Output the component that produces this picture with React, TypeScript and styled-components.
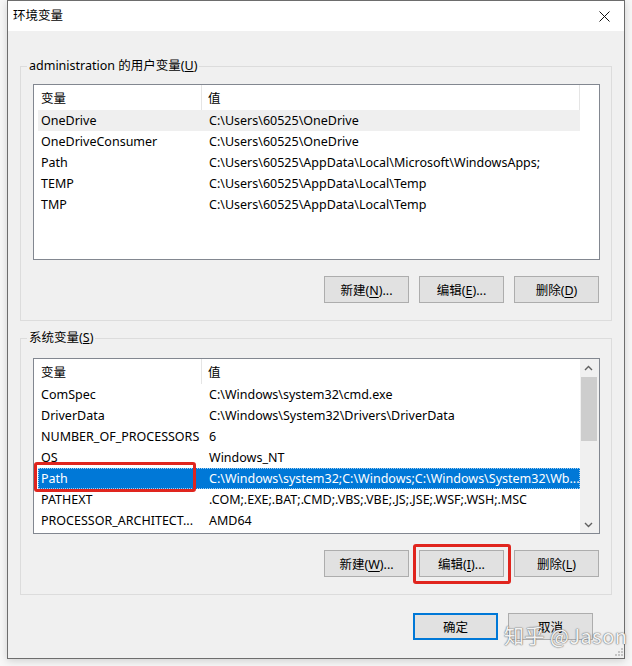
import React from "react";
import styled, { createGlobalStyle, css } from "styled-components";

const FONT = `"Noto Sans", "Noto Sans CJK SC", sans-serif`;

const GlobalStyle = createGlobalStyle`
  html, body { margin: 0; padding: 0; }
  body { background: #f7f7f7; font-family: ${FONT}; }
`;

const Page = styled.div`
  position: relative;
  width: 632px;
  height: 666px;
  box-sizing: border-box;
  padding: 0 7px 7px 7px;
  background: #f7f7f7;
`;

const Window = styled.div`
  height: 100%;
  box-sizing: border-box;
  border: 1px solid #6d6d6d;
  background: #f0f0f0;
  display: flex;
  flex-direction: column;
  box-shadow: 0 2px 8px rgba(0, 0, 0, 0.16);
  font-family: ${FONT};
  font-size: 12.5px;
  color: #000;
`;

const TitleBar = styled.div`
  height: 30px;
  flex: none;
  background: #fff;
  display: flex;
  align-items: center;
  justify-content: space-between;
  padding: 0 14px 0 5px;
`;

const Title = styled.div`
  line-height: 18px;
`;

const Body = styled.div`
  flex: 1;
  display: flex;
  flex-direction: column;
  padding: 26px 12px 0;
`;

const Group = styled.fieldset<{ $mt?: number }>`
  margin: ${(p) => p.$mt ?? 0}px 0 0;
  padding: 0 11px 17px 12px;
  border: 1px solid #dcdcdc;
  min-width: 0;
`;

const GroupLabel = styled.legend`
  margin-left: -6px;
  padding: 0 2px;
  line-height: 18px;
`;

const ListBox = styled.div<{ $mt: number }>`
  position: relative;
  margin-top: ${(p) => p.$mt}px;
  height: 176px;
  box-sizing: border-box;
  border: 1px solid #828790;
  background: #fff;
  display: flex;
  overflow: visible;
`;

const ListMain = styled.div`
  flex: 1;
  min-width: 0;
  overflow: hidden;
`;

const Header = styled.div<{ $cols: string }>`
  display: grid;
  grid-template-columns: ${(p) => p.$cols};
  height: 25px;
`;

const HeaderCell = styled.div<{ $pl: number; $sep?: boolean }>`
  padding-left: ${(p) => p.$pl}px;
  display: flex;
  align-items: center;
  ${(p) =>
    p.$sep &&
    css`
      border-right: 1px solid #e5e5e5;
    `}
`;

const Row = styled.div<{ $state?: "hover" | "selected" }>`
  margin-left: 4px;
  width: 542px;
  height: 21px;
  display: grid;
  grid-template-columns: 164px 1fr;
  align-items: center;
  white-space: nowrap;
  ${(p) =>
    p.$state === "hover" &&
    css`
      background: #efefef;
    `}
  ${(p) =>
    p.$state === "selected" &&
    css`
      background: #0078d7;
      color: #fff;
      outline: 1px dotted #9fd0f5;
      outline-offset: -1px;
    `}
`;

const NameCell = styled.div`
  padding-left: 3px;
  overflow: hidden;
`;

const ValueCell = styled.div`
  padding-left: 7px;
  overflow: hidden;
`;

const ScrollBar = styled.div`
  width: 19px;
  flex: none;
  background: #f0f0f0;
  display: flex;
  flex-direction: column;
`;

const ArrowBtn = styled.div`
  height: 17px;
  flex: none;
  display: flex;
  align-items: center;
  justify-content: center;
  padding-right: 2px;
`;

const Track = styled.div`
  flex: 1;
  padding: 1px 2px 0 1px;
`;

const Thumb = styled.div`
  height: 64px;
  background: #cdcdcd;
`;

const ButtonRow = styled.div<{ $mt: number }>`
  display: flex;
  justify-content: flex-end;
  gap: 10px;
  margin-top: ${(p) => p.$mt}px;
  padding-right: 1px;
`;

const Button = styled.button<{ $default?: boolean }>`
  width: 85px;
  height: 27px;
  box-sizing: border-box;
  border: 1px solid #adadad;
  background: #e1e1e1;
  font-family: ${FONT};
  font-size: 12.5px;
  color: #000;
  padding: 0;
  margin: 0;
  ${(p) =>
    p.$default &&
    css`
      border: 2px solid #0078d7;
    `}
  u {
    text-decoration-thickness: 1px;
    text-underline-offset: 2px;
  }
`;

const Footer = styled.div`
  display: flex;
  justify-content: flex-end;
  gap: 10px;
  margin-top: 18px;
  padding-right: 19px;
`;

const Marked = styled.div`
  position: relative;
  display: flex;
`;

const RedMark = styled.div`
  position: absolute;
  border: 3px solid #e0251e;
  border-radius: 3px;
  pointer-events: none;
`;

const ButtonMark = styled(RedMark)`
  inset: -6px -7px -7px -6px;
`;

const RowMark = styled(RedMark)`
  left: 0;
  top: 103px;
  width: 162px;
  height: 30px;
  box-sizing: border-box;
`;

const Watermark = styled.div`
  position: absolute;
  left: 504px;
  top: 623px;
  font-family: "Noto Sans CJK SC", "Noto Sans", sans-serif;
  font-size: 20px;
  line-height: 26px;
  color: rgba(255, 255, 255, 0.92);
  text-shadow: 0 0 1px #7a7a7a, 0 0 1px #7a7a7a, 0 0 2px rgba(0, 0, 0, 0.35);
  letter-spacing: 0.5px;
  white-space: nowrap;
`;

const Grip = styled.svg`
  position: absolute;
  right: 9px;
  bottom: 10px;
`;

const CloseIcon = () => (
  <svg width="11" height="11" viewBox="0 0 11 11">
    <path d="M0.5 0.5 L10.5 10.5 M10.5 0.5 L0.5 10.5" stroke="#111" strokeWidth="1" />
  </svg>
);

const Chevron = ({ up }: { up?: boolean }) => (
  <svg width="9" height="6" viewBox="0 0 9 6">
    <path
      d={up ? "M1 5 L4.5 1.5 L8 5" : "M1 1 L4.5 4.5 L8 1"}
      fill="none"
      stroke="#606060"
      strokeWidth="1.4"
    />
  </svg>
);

type Var = [string, string];

const userVars: Var[] = [
  ["OneDrive", "C:\\Users\\60525\\OneDrive"],
  ["OneDriveConsumer", "C:\\Users\\60525\\OneDrive"],
  ["Path", "C:\\Users\\60525\\AppData\\Local\\Microsoft\\WindowsApps;"],
  ["TEMP", "C:\\Users\\60525\\AppData\\Local\\Temp"],
  ["TMP", "C:\\Users\\60525\\AppData\\Local\\Temp"],
];

const sysVars: Var[] = [
  ["ComSpec", "C:\\Windows\\system32\\cmd.exe"],
  ["DriverData", "C:\\Windows\\System32\\Drivers\\DriverData"],
  ["NUMBER_OF_PROCESSORS", "6"],
  ["OS", "Windows_NT"],
  ["Path", "C:\\Windows\\system32;C:\\Windows;C:\\Windows\\System32\\Wb..."],
  ["PATHEXT", ".COM;.EXE;.BAT;.CMD;.VBS;.VBE;.JS;.JSE;.WSF;.WSH;.MSC"],
  ["PROCESSOR_ARCHITECT...", "AMD64"],
];

export default function App() {
  return (
    <>
      <GlobalStyle />
      <Page>
        <Window>
          <TitleBar>
            <Title>环境变量</Title>
            <CloseIcon />
          </TitleBar>
          <Body>
            <Group>
              <GroupLabel>
                administration 的用户变量(<u>U</u>)
              </GroupLabel>
              <ListBox $mt={9}>
                <ListMain>
                  <Header $cols="168px 378px 1fr">
                    <HeaderCell $pl={7} $sep>
                      变量
                    </HeaderCell>
                    <HeaderCell $pl={6} $sep>
                      值
                    </HeaderCell>
                    <HeaderCell $pl={0} />
                  </Header>
                  {userVars.map(([n, v], i) => (
                    <Row key={n + i} $state={i === 0 ? "hover" : undefined}>
                      <NameCell>{n}</NameCell>
                      <ValueCell>{v}</ValueCell>
                    </Row>
                  ))}
                </ListMain>
              </ListBox>
              <ButtonRow $mt={16}>
                <Button>
                  新建(<u>N</u>)...
                </Button>
                <Button>
                  编辑(<u>E</u>)...
                </Button>
                <Button>
                  删除(<u>D</u>)
                </Button>
              </ButtonRow>
            </Group>

            <Group $mt={8}>
              <GroupLabel>
                系统变量(<u>S</u>)
              </GroupLabel>
              <ListBox $mt={11}>
                <ListMain>
                  <Header $cols="168px 1fr">
                    <HeaderCell $pl={7} $sep>
                      变量
                    </HeaderCell>
                    <HeaderCell $pl={6}>值</HeaderCell>
                  </Header>
                  {sysVars.map(([n, v], i) => (
                    <Row key={n + i} $state={i === 4 ? "selected" : undefined}>
                      <NameCell>{n}</NameCell>
                      <ValueCell>{v}</ValueCell>
                    </Row>
                  ))}
                </ListMain>
                <ScrollBar>
                  <ArrowBtn>
                    <Chevron up />
                  </ArrowBtn>
                  <Track>
                    <Thumb />
                  </Track>
                  <ArrowBtn>
                    <Chevron />
                  </ArrowBtn>
                </ScrollBar>
                <RowMark />
              </ListBox>
              <ButtonRow $mt={16}>
                <Button>
                  新建(<u>W</u>)...
                </Button>
                <Marked>
                  <Button>
                    编辑(<u>I</u>)...
                  </Button>
                  <ButtonMark />
                </Marked>
                <Button>
                  删除(<u>L</u>)
                </Button>
              </ButtonRow>
            </Group>

            <Footer>
              <Button $default>确定</Button>
              <Button>取消</Button>
            </Footer>
          </Body>
        </Window>
        <Grip width="8" height="8" viewBox="0 0 8 8">
          <g fill="#c4c4c4">
            <rect x="6" y="0" width="2" height="2" />
            <rect x="3" y="3" width="2" height="2" />
            <rect x="6" y="3" width="2" height="2" />
            <rect x="0" y="6" width="2" height="2" />
            <rect x="3" y="6" width="2" height="2" />
            <rect x="6" y="6" width="2" height="2" />
          </g>
        </Grip>
        <Watermark>知乎 @Jason</Watermark>
      </Page>
    </>
  );
}
